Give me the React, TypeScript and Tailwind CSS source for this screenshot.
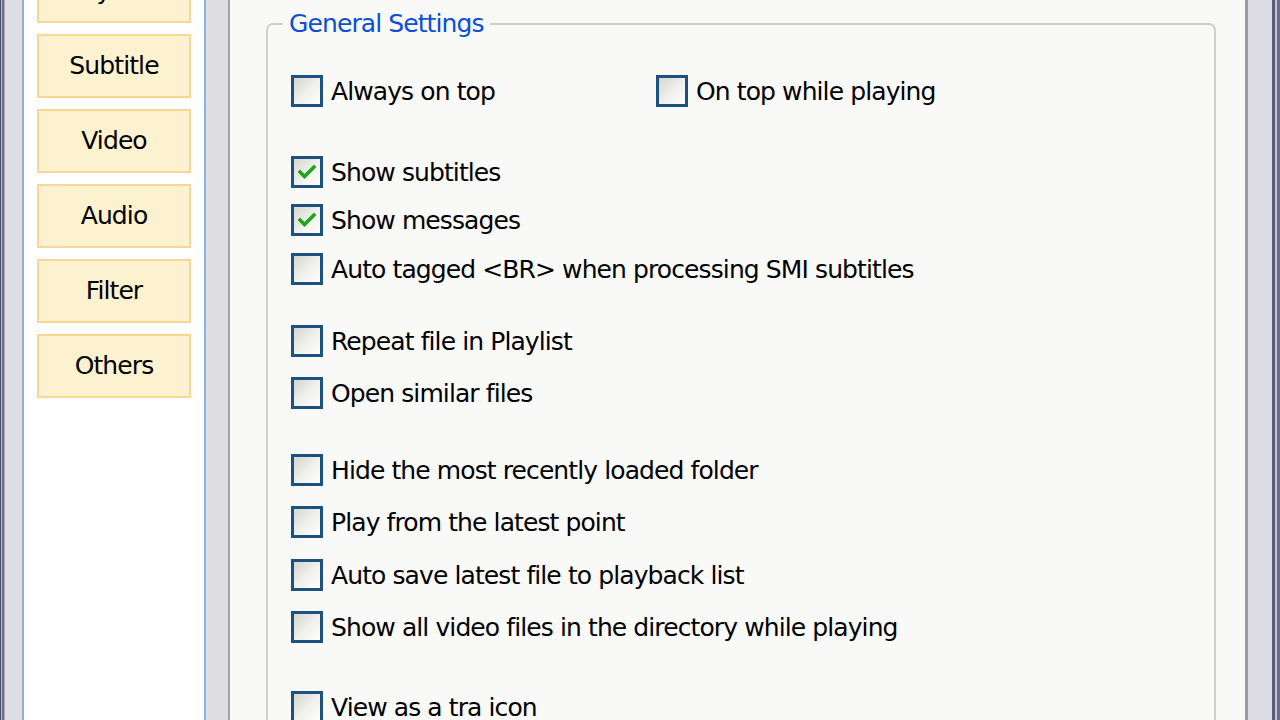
import React from "react";

const font = { fontFamily: '"DejaVu Sans", Verdana, sans-serif' };

const tabs = ["Playback", "Subtitle", "Video", "Audio", "Filter", "Others"];

type Row = { label: string; checked?: boolean; gap: string };

function CheckBox({ checked }: { checked?: boolean }) {
  return (
    <span className="flex h-[32px] w-[32px] shrink-0 items-center justify-center border-[3px] border-[#1c5180] bg-linear-to-br from-[#d6d6cf] via-[#efefeb] to-white">
      {checked && (
        <svg width="18" height="14" viewBox="0 0 18 14">
          <path d="M2 7 L6.5 11.5 L16 2" fill="none" stroke="#21a121" strokeWidth="3.6" strokeLinecap="square" />
        </svg>
      )}
    </span>
  );
}

function Option({ label, checked }: { label: string; checked?: boolean }) {
  return (
    <label className="flex h-[32px] items-center gap-[8px] text-[25px] leading-none tracking-[-0.9px] text-black">
      <CheckBox checked={checked} />
      <span className="whitespace-nowrap">{label}</span>
    </label>
  );
}

export default function App() {
  const rows: Row[] = [
    { label: "Show subtitles", checked: true, gap: "mt-[49px]" },
    { label: "Show messages", checked: true, gap: "mt-[16px]" },
    { label: "Auto tagged <BR> when processing SMI subtitles", gap: "mt-[17px]" },
    { label: "Repeat file in Playlist", gap: "mt-[40px]" },
    { label: "Open similar files", gap: "mt-[20px]" },
    { label: "Hide the most recently loaded folder", gap: "mt-[45px]" },
    { label: "Play from the latest point", gap: "mt-[20px]" },
    { label: "Auto save latest file to playback list", gap: "mt-[21px]" },
    { label: "Show all video files in the directory while playing", gap: "mt-[20px]" },
    { label: "View as a tra icon", gap: "mt-[48px]" },
  ];

  return (
    <div className="flex h-[720px] w-[1280px] overflow-hidden bg-[#f8f8f8]" style={font}>
      {/* left window frame */}
      <div className="w-[1px] bg-[#4b4b6b]" />
      <div className="w-[1px] bg-[#b8b8c8]" />
      <div className="w-[2px] bg-[#6e6e8c]" />
      <div className="w-[1px] bg-[#a9a9b4]" />
      <div className="w-[17px] bg-[#dfdfe3]" />

      {/* category list */}
      <div className="w-[184px] border-x-2 border-[#8fb0d8] bg-white px-[13px]">
        <div className="-mt-[41px] flex flex-col gap-[11px]">
          {tabs.map((t) => (
            <div
              key={t}
              className="flex h-[64px] items-center justify-center border-2 border-[#f8d698] bg-[#fdf2cf] text-[25px] tracking-[-0.9px] text-black"
            >
              {t}
            </div>
          ))}
        </div>
      </div>

      <div className="w-[22px] bg-[#dfdfe3]" />
      <div className="w-[2px] bg-[#a2a2a6]" />

      {/* settings page */}
      <div className="flex-1 bg-[#f9f9f8] pl-[36px] pr-[29px] pt-[10px]">
        <fieldset className="h-[800px] rounded-[7px] border-2 border-[#d0d0c6] pl-[23px] pt-[37px]">
          <legend className="-ml-[8px] px-[6px] text-[25px] leading-[28px] tracking-[-0.9px] text-[#0b4fd6]">
            General Settings
          </legend>
          <div className="flex">
            <div className="w-[365px]">
              <Option label="Always on top" />
            </div>
            <Option label="On top while playing" />
          </div>
          {rows.map((r) => (
            <div key={r.label} className={r.gap}>
              <Option label={r.label} checked={r.checked} />
            </div>
          ))}
        </fieldset>
      </div>

      {/* right window frame */}
      <div className="w-[3px] bg-[#9a9aa2]" />
      <div className="w-[24px] bg-[#dcdce2]" />
      <div className="w-[3px] bg-[#5a5a80]" />
      <div className="w-[2px] bg-[#c4c4d0]" />
      <div className="w-[3px] bg-[#6a6a8a]" />
    </div>
  );
}
